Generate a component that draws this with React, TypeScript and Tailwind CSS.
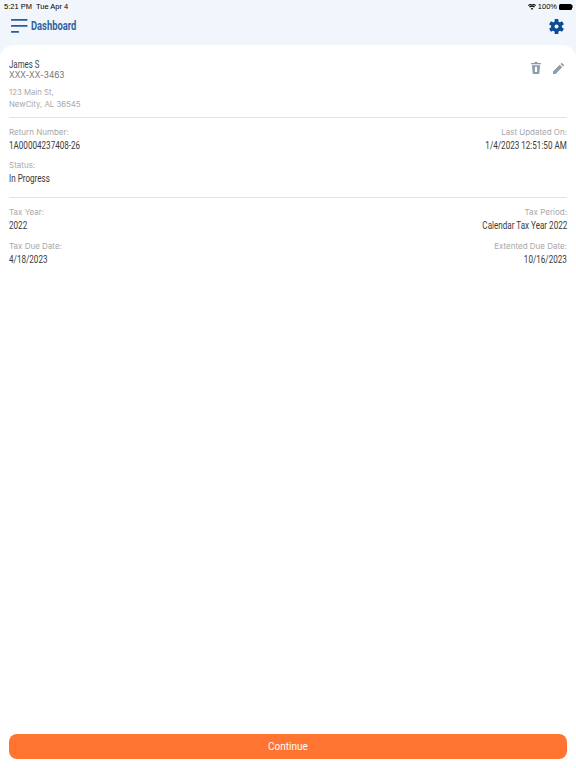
import React from 'react';

const labelCls = "font-['Inter',sans-serif] text-[8px] leading-[12px] text-[#a8a8a8]";
const valueCls = "font-['Roboto',sans-serif] text-[10.5px] leading-[13px] text-[#3a3a3a] whitespace-nowrap";

const Field = ({ label, value, right }: { label: string; value: string; right?: boolean }) => (
  <div className={right ? 'flex flex-col items-end' : 'flex flex-col items-start'}>
    <div className={labelCls}>{label}</div>
    <div className={`${valueCls} mt-[1px] ${right ? 'origin-right' : 'origin-left'} scale-x-[0.77]`}>{value}</div>
  </div>
);

const App: React.FC = () => {
  return (
    <div className="w-[576px] h-[768px] bg-[#f0f6fb] flex flex-col overflow-hidden font-['Roboto',sans-serif]">
      {/* status bar */}
      <div className="h-[12px] pl-[4px] pr-[3px] flex items-center justify-between text-[7.5px] font-medium text-black font-['Liberation_Sans',sans-serif]">
        <div className="flex gap-[4px] pt-[1px]">
          <span>5:21 PM</span>
          <span>Tue Apr 4</span>
        </div>
        <div className="flex items-center gap-[2px] pt-[1px]">
          <svg width="8" height="6" viewBox="0 0 24 18" fill="#000">
            <path d="M12 18l-3.6-4.2a5.4 5.4 0 0 1 7.2 0zM5.8 10.6l-2.4-2.7a13 13 0 0 1 17.2 0l-2.4 2.7a9.4 9.4 0 0 0-12.4 0zM1.9 6.2L0 3.6a18 18 0 0 1 24 0l-1.9 2.6a15 15 0 0 0-20.2 0z" />
          </svg>
          <span>100%</span>
          <div className="flex items-center">
            <div className="w-[13px] h-[6px] rounded-[1.5px] bg-black" />
            <div className="w-[1px] h-[3px] bg-[#777]" />
          </div>
        </div>
      </div>

      {/* header */}
      <div className="h-[33px] pl-[11px] pr-[12px] pb-[5px] flex items-center justify-between">
        <div className="flex items-center gap-[3px]">
          <svg width="17" height="14" viewBox="0 0 17 14" fill="#2a5c9f">
            <rect x="0" y="0" width="16.5" height="1.8" rx="0.6" />
            <rect x="0" y="6" width="16.5" height="1.8" rx="0.6" />
            <rect x="0" y="12" width="8" height="1.8" rx="0.6" />
          </svg>
          <span className="text-[12.5px] font-bold text-[#2f62a3] inline-block origin-left scale-x-[0.75]">Dashboard</span>
        </div>
        <svg width="15" height="15" viewBox="0 0 24 24" fill="#0c4a94">
          <circle cx="12" cy="12" r="8.6" />
          <rect x="9" y="0" width="6" height="24" rx="1" />
          <rect x="9" y="0" width="6" height="24" rx="1" transform="rotate(60 12 12)" />
          <rect x="9" y="0" width="6" height="24" rx="1" transform="rotate(120 12 12)" />
          <circle cx="12" cy="12" r="3.2" fill="#f0f6fb" />
        </svg>
      </div>

      {/* card */}
      <div className="flex-1 bg-white rounded-t-[14px] px-[9px] flex flex-col">
        <div className="flex justify-between pt-[14px]">
          <div className="leading-[11px]">
            <div className="text-[10.5px] leading-[11px] text-[#444] origin-left scale-x-[0.75]">James S</div>
            <div className="font-['Inter',sans-serif] text-[8.25px] leading-[11px] text-[#777]">XXX-XX-3463</div>
          </div>
          <div className="flex items-center gap-[12px] h-[18px] pr-[3px]">
            <svg width="10" height="12" viewBox="0 0 22 26" fill="#8c9daa">
              <path d="M8 0h6l1 2h7v3H0V2h7zM2 7h18l-1.6 17a2 2 0 0 1-2 2H5.600a2 2 0 0 1-2-2zm6.500 3v12h5V10z" />
            </svg>
            <svg width="11" height="11" viewBox="0 0 24 24" fill="#8c9daa">
              <path d="M0 24v-5.500L14.600 3.900l5.500 5.500L5.500 24zM16.400 2.100L18 .5a1.700 1.700 0 0 1 2.400 0l3.100 3.100a1.700 1.700 0 0 1 0 2.400l-1.600 1.600z" />
            </svg>
          </div>
        </div>
        <div className="font-['Inter',sans-serif] text-[7.8px] leading-[12px] text-[#a8a8a8] mt-[5px]">
          <div>123 Main St,</div>
          <div>NewCity, AL 36545</div>
        </div>
        <div className="h-[1px] bg-[#e2e2e2] mt-[7px]" />

        <div className="flex justify-between mt-[8px]">
          <Field label="Return Number:" value="1A00004237408-26" />
          <Field label="Last Updated On:" value="1/4/2023 12:51:50 AM" right />
        </div>
        <div className="mt-[7px]">
          <Field label="Status:" value="In Progress" />
        </div>
        <div className="h-[1px] bg-[#e2e2e2] mt-[12px]" />

        <div className="flex justify-between mt-[8px]">
          <Field label="Tax Year:" value="2022" />
          <Field label="Tax Period:" value="Calendar Tax Year 2022" right />
        </div>
        <div className="flex justify-between mt-[8px]">
          <Field label="Tax Due Date:" value="4/18/2023" />
          <Field label="Extented Due Date:" value="10/16/2023" right />
        </div>

        <div className="mt-auto pb-[9px]">
          <button className="w-full h-[25px] rounded-[8px] bg-[#ff7430] text-[#fff] text-[10px] font-normal font-['Roboto',sans-serif]">
            Continue
          </button>
        </div>
      </div>
    </div>
  );
};

export default App;
